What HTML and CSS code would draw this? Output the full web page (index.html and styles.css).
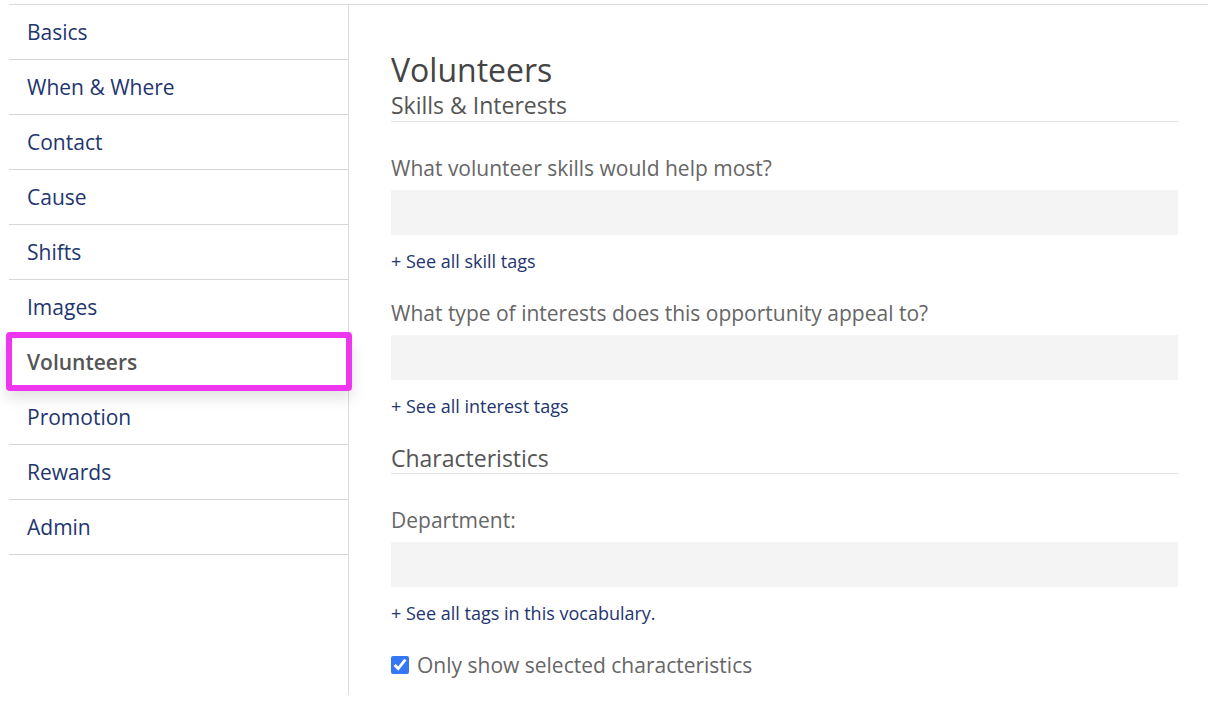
FILE: index.html
```html
<!DOCTYPE html>
<html lang="en">
<head>
    <meta charset="UTF-8" />
    <title>Volunteers</title>
    <link rel="stylesheet" href="styles.css">
</head>
<body>
    <div class="page">
        <ul class="side-nav">
            <li><a href="#">Basics</a></li>
            <li><a href="#">When &amp; Where</a></li>
            <li><a href="#">Contact</a></li>
            <li><a href="#">Cause</a></li>
            <li><a href="#">Shifts</a></li>
            <li><a href="#">Images</a></li>
            <li class="active"><a href="#">Volunteers</a></li>
            <li><a href="#">Promotion</a></li>
            <li><a href="#">Rewards</a></li>
            <li><a href="#">Admin</a></li>
        </ul>
        <div class="main">
            <h1>Volunteers</h1>
            <h2>Skills &amp; Interests</h2>

            <label class="field-label">What volunteer skills would help most?</label>
            <div class="tag-input"></div>
            <a class="see-all" href="#">+ See all skill tags</a>

            <label class="field-label">What type of interests does this opportunity appeal to?</label>
            <div class="tag-input"></div>
            <a class="see-all" href="#">+ See all interest tags</a>

            <h2 class="section">Characteristics</h2>

            <label class="field-label">Department:</label>
            <div class="tag-input"></div>
            <a class="see-all" href="#">+ See all tags in this vocabulary.</a>

            <label class="check-row">
                <input type="checkbox" checked />
                Only show selected characteristics
            </label>
        </div>
    </div>
</body>
</html>
```

FILE: styles.css
```css
* {
    font-family: 'Open Sans', 'Liberation Sans', sans-serif;
    box-sizing: border-box;
}
body {
    margin: 0;
    padding-top: 4px;
    background: #fff;
}
.page {
    display: flex;
    margin-left: 9px;
    border-top: 1px solid #dcdcdc;
}
.side-nav {
    list-style: none;
    margin: 0;
    padding: 0;
    width: 340px;
    flex-shrink: 0;
    border-right: 1px solid #dcdcdc;
}
.side-nav li {
    height: 55px;
    border-bottom: 1px solid #d6d6d6;
    display: flex;
    align-items: center;
    padding-left: 18px;
}
.side-nav a {
    color: #23356f;
    text-decoration: none;
    font-size: 21px;
}
.side-nav .active {
    position: relative;
    margin: 0 -4px 0 -3px;
    padding-left: 21px;
    box-shadow: 0 8px 14px rgba(0, 0, 0, 0.12);
}
.side-nav .active::after {
    /* highlight frame drawn over the item */
    content: "";
    position: absolute;
    top: -3px;
    left: 0;
    right: 0;
    bottom: -2px;
    border: 6px solid #ee36f0;
    border-radius: 4px;
}
.side-nav .active a {
    color: #555;
    font-weight: 600;
}
.main {
    flex: 1;
    padding: 45px 30px 15px 42px;
    display: flex;
    flex-direction: column;
    align-items: flex-start;
}
h1 {
    margin: 0;
    font-size: 32px;
    line-height: 40px;
    font-weight: 400;
    color: #444;
}
h2 {
    margin: 0 0 31px;
    align-self: stretch;
    font-size: 23px;
    line-height: 30px;
    font-weight: 400;
    color: #555;
    padding-bottom: 1px;
    border-bottom: 1px solid #e4e4e4;
}
h2.section {
    margin-bottom: 31px;
    padding-bottom: 0;
}
.field-label {
    font-size: 21px;
    line-height: 30px;
    color: #666;
    margin-bottom: 7px;
}
.tag-input {
    align-self: stretch;
    height: 45px;
    background: #f4f4f4;
}
.see-all {
    margin-top: 14px;
    margin-bottom: 25px;
    font-size: 18px;
    line-height: 24px;
    color: #23356f;
    text-decoration: none;
}
.check-row {
    display: flex;
    align-items: center;
    gap: 8px;
    font-size: 21px;
    line-height: 30px;
    color: #666;
}
.check-row input {
    margin: 0;
    width: 18px;
    height: 18px;
    accent-color: #3478f6;
}
```
